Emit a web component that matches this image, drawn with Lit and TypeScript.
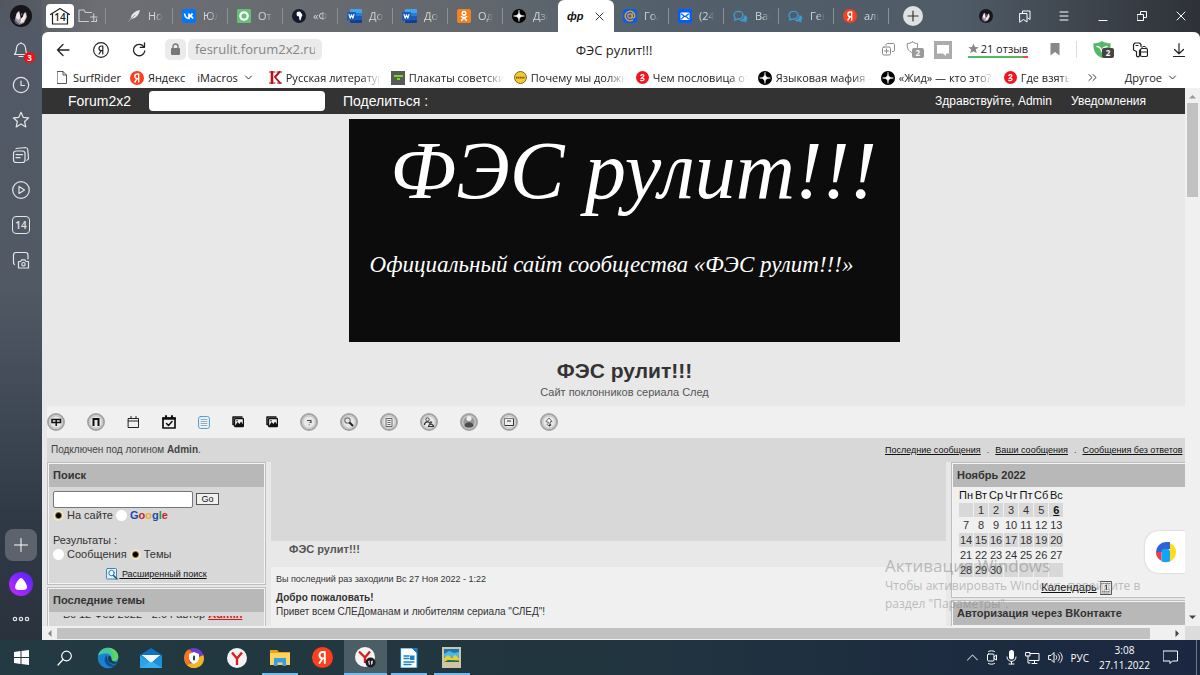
import { LitElement, html, svg, css, nothing } from "lit";
import type { TemplateResult } from "lit";
import { customElement } from "lit/decorators.js";
import { classMap } from "lit/directives/class-map.js";

const icon = (w: number, h: number, body: unknown) =>
  html`<svg width=${w} height=${h} viewBox="0 0 ${w} ${h}" fill="none" stroke-linecap="round" stroke-linejoin="round" aria-hidden="true">${body}</svg>`;

const avatar = (s: number) => html`<svg width=${s} height=${s} viewBox="0 0 22 22" aria-hidden="true">
  <circle cx="11" cy="11" r="11" fill="#17151c"/>
  <path d="M6 8l3-2 3 3 4-2 1 5-3 6-5 2-4-5z" fill="#a99aa4"/>
  <path d="M6.500 9l2.500-2 1.500 4-1.500 4-3-2z" fill="#f3e9ea"/><path d="M12 10l3.500-2 .5 4-2.500 5-3 1 .5-4z" fill="#f3e9ea"/>
  <path d="M10 2l.5 7 1 4M14 3l-1 6-1 3M7 5l-2 6" stroke="#17151c" stroke-width="1.300" fill="none"/>
  <path d="M3 14l4 3 4 3-5-1z" fill="#55607e"/></svg>`;

const I = {
  feather: icon(14, 14, svg`<path d="M1 13L4 9C4 5 8 2 13 1C12 5 10 9 4.500 10" fill="#e8e8e8"/><path d="M1 13L8 6" stroke="#8b8b8b" stroke-width=".8"/>`),
  vk: icon(14, 14, svg`<rect width="14" height="14" rx="3" fill="#07f"/><path d="M2.500 4.500C3 8 4.500 9.500 7 9.500V4.500M7 7.200C9 7 10 5.500 10.500 4.500M7.600 7.100C9.500 7.300 10.500 8.500 11 9.500" stroke="#fff" stroke-width="1.700" stroke-linecap="butt"/>`),
  greenO: icon(14, 14, svg`<rect width="14" height="14" rx="1" fill="#63c174"/><circle cx="7" cy="7" r="3.700" stroke="#fff" stroke-width="2.200"/>`),
  africa: icon(14, 14, svg`<circle cx="7" cy="7" r="7" fill="#15192e"/><path d="M5 3l3-.5 1.500 2L10.500 6 9.500 8 8.500 11.500 7.500 11 7 7.500 5 7 4.500 5z" fill="#fff"/>`),
  word: icon(15, 14, svg`<rect x="3" width="12" height="14" rx="1" fill="#41a5ee"/><path d="M3 4h12v3H3z" fill="#2b7cd3"/><path d="M3 7h12v3.500H3z" fill="#185abd"/><path d="M3 10.500h12V13a1 1 0 0 1-1 1H4a1 1 0 0 1-1-1z" fill="#103f91"/><rect y="3" width="9" height="8.500" rx="1" fill="#185abd"/><path d="M2 5.300l1.200 4L4.500 5.800l1.300 3.500L7 5.300" stroke="#fff" stroke-width="1.100"/>`),
  ok: icon(14, 14, svg`<rect width="14" height="14" rx="2" fill="#f58220"/><circle cx="7" cy="4.200" r="1.800" stroke="#fff" stroke-width="1.500"/><path d="M4.300 7.700c1.500 1 3.900 1 5.400 0M7 8.700L4.600 11.300M7 8.700l2.400 2.600" stroke="#fff" stroke-width="1.500"/>`),
  zen: icon(14, 14, svg`<circle cx="7" cy="7" r="7" fill="#000"/><path d="M7 1.500C7.200 5.500 8.500 6.800 12.500 7 8.500 7.200 7.200 8.500 7 12.500 6.800 8.500 5.500 7.200 1.500 7 5.500 6.800 6.800 5.500 7 1.500z" fill="#fff" stroke="#fff" stroke-width=".5"/>`),
  at: icon(14, 14, svg`<rect width="14" height="14" rx="3" fill="#005ff9"/><circle cx="7" cy="7" r="2.200" stroke="#ff9e00" stroke-width="1.300"/><path d="M9.200 5v2.600c0 1.800 2.600 1.600 2.600-.6A4.800 4.800 0 1 0 9.500 11.100" stroke="#ff9e00" stroke-width="1.300"/>`),
  mail: icon(14, 14, svg`<rect width="14" height="14" rx="2" fill="#005ff9"/><rect x="2.500" y="3.500" width="9" height="7.500" rx="1" fill="#fff"/><path d="M3.500 5L7 7.800 10.500 5M3.500 9.800l2-2M10.500 9.800l-2-2" stroke="#005ff9" stroke-width="1.200"/>`),
  chat: icon(15, 13, svg`<path d="M1 5a4.500 3.800 0 1 1 4.500 4C4 9 3.500 9.800 1.500 10c1-1 .7-1.700.7-2C1.500 7.300 1 6 1 5z" stroke="#3f9ad0" stroke-width="1.400"/><path d="M11.500 5c3 1 3.500 4 1.800 5.400-.2.500.3 1.200 1 1.900-1.600 0-2-.4-2.900-.9C9 11.800 7 11 6.500 10c3 0 5-2 5-5z" fill="#3f9ad0"/>`),
  ya: icon(14, 14, svg`<circle cx="7" cy="7" r="7" fill="#fc3f1d"/><path d="M8.700 11V3H7.500C5.500 3 4.800 4.300 4.800 5.300 4.800 6.800 6 7.700 7.500 7.700H8.500M7 7.700L4.900 11" stroke="#fff" stroke-width="1.400"/>`),
  doc: icon(10, 13, svg`<path d="M.5.5h5.500l3.500 3.500v8.500H.5zM6 .5V4h3.500" stroke="#555"/>`),
  kbook: icon(13, 13, svg`<path d="M0 1h6M0 12h6M8 1h4.500M8.500 12H13" stroke="#b5121b" stroke-width="1.200"/><path d="M3 1v11" stroke="#b5121b" stroke-width="2.600"/><path d="M10.500 1L6 6l5 6" stroke="#b5121b" stroke-width="1.900"/>`),
  poster: icon(14, 14, svg`<rect width="14" height="14" fill="#555c55"/><path d="M3 5h9M6 8h3" stroke="#7ed321" stroke-width="1.800" stroke-linecap="butt"/>`),
  yellow: icon(13, 13, svg`<circle cx="6.500" cy="6.500" r="6" fill="#f5c92e" stroke="#7b6a2a"/><path d="M2 6.700h9" stroke="#6d5511" stroke-width="1.800" stroke-dasharray="1.300 .5" stroke-linecap="butt"/>`),
  redZ: icon(13, 13, svg`<circle cx="6.500" cy="6.500" r="6.500" fill="#f0141e"/><path d="M4.800 4.300C5.800 3.200 8 3.500 7.900 4.800 7.800 6 5.200 6.300 5 7.600 5.800 7.100 8.300 7 8 8.600 7.700 10 5.500 9.900 4.700 9.300" stroke="#fff" stroke-width="1.200"/>`),
  chev: icon(9, 9, svg`<path d="M1.500 3l3 3 3-3" stroke="#333"/>`),
};

const disc = (body: unknown, dark = false) => html`<svg width="18" height="18" viewBox="0 0 18 18" fill="none" aria-hidden="true">
  <circle cx="9" cy="9" r="8" fill=${dark ? "#999" : "#e8e8e8"} stroke="#a3a3a3" stroke-width="2"/>
  <circle cx="9" cy="9" r="6.300" stroke="#c8c8c8" stroke-width="1.400"/>${body}</svg>`;
const photos = icon(12, 12, svg`<path d="M1 8.500V1h9M1 1v7.500h1" stroke="#111" stroke-width="1.500"/><rect x="2.500" y="2.500" width="9" height="8" rx="1" fill="#f2f2f2" stroke="#111" stroke-width="1.400"/><path d="M3 10l2.500-4 2 2 1.500-2.500L11.500 9v1.500z" fill="#111"/><circle cx="5" cy="4.700" r=".8" fill="#111"/>`);

const NAV: [string, TemplateResult][] = [
  ["Портал", disc(svg`<path d="M5 6.500h8.500v3H5zM9.200 6v7" stroke="#111" stroke-width="1.500"/>`)],
  ["Форум", disc(svg`<path d="M6.500 13V6h5v7" stroke="#111" stroke-width="2" stroke-linecap="butt"/>`)],
  ["Календарь", icon(13, 12, svg`<path d="M1.500 2.500h10v9h-10zM1.500 5h10M4 .5v2M9 .5v2" stroke="#222"/>`)],
  ["События", icon(14, 14, svg`<path d="M1 3h12v10H1z" stroke="#111" stroke-width="1.700"/><path d="M1 3.500h12" stroke="#111" stroke-width="2.500"/><path d="M4 1v2M10 1v2" stroke="#111" stroke-width="2"/><path d="M4.500 8.500l2 2L10 6.500" stroke="#111" stroke-width="1.500"/>`)],
  ["Публикации", icon(12, 13, svg`<rect x=".6" y=".6" width="10.800" height="11.800" rx="2" fill="#eef6fa" stroke="#4a9cc4"/><path d="M3 3.500h6M3 5.500h6M3 7.500h6M3 9.500h6" stroke="#7b98a6" stroke-width=".8"/>`)],
  ["Галерея", photos],
  ["Фото", photos],
  ["FAQ", disc(svg`<path d="M7 7.500h4v2H9.500M9.200 11.500v.8" stroke="#444" stroke-width="1.100"/>`)],
  ["Поиск", disc(svg`<circle cx="7.500" cy="7.500" r="2.700" stroke="#777" stroke-width="1.200"/><path d="M9.500 9.500l3.500 3.500" stroke="#222" stroke-width="1.900"/>`)],
  ["Регистрация", disc(svg`<path d="M6 5.500h6v8H6z" fill="#eee" stroke="#666"/><path d="M7.500 7.500h3M7.500 9.500h3M7.500 11.500h3" stroke="#666"/>`)],
  ["Пользователи", disc(svg`<circle cx="7.500" cy="6.500" r="1.700" stroke="#444"/><path d="M4.500 12c0-4 5.500-4 5.500-1M8.500 13.500c.5-3 4.500-3 5 0z" stroke="#333" stroke-width="1.200"/><circle cx="11" cy="9.500" r="1.300" fill="#555"/>`)],
  ["Профиль", disc(svg`<circle cx="9" cy="5.500" r="2.500" fill="#f0f0f0"/><path d="M4.500 13c0-5 9-5 9 0-2 2-7 2-9 0z" fill="#4d4d4d"/>`, true)],
  ["Сообщения", disc(svg`<path d="M4.500 5.500h9v7h-9z" fill="#eee" stroke="#777"/><path d="M5 12.500h8.500V6M7 8h4" stroke="#333"/>`)],
  ["Выход", disc(svg`<path d="M9 5l3 3.500h-1.500L9.500 13 7 11.500l2-2L6 8.500z" fill="#fff" stroke="#666"/><path d="M9 13l2-1.500" stroke="#222" stroke-width="1.300"/>`)],
];

const TABS_LEFT: [string, TemplateResult][] = [
  ["Новая", I.feather], ["Юля", I.vk], ["Ответы", I.greenO], ["«Фонд", I.africa], ["Документ", I.word],
  ["Документ", I.word], ["Одноклассники", I.ok], ["Дзен", I.zen],
];
const TABS_RIGHT: [string, TemplateResult][] = [
  ["Голос", I.at], ["(24) Почта", I.mail], ["Ваш", I.chat], ["Ген", I.chat], ["алиса", I.ya],
];
const MARKS: [string, TemplateResult][] = [
  ["Русская литература", I.kbook], ["Плакаты советские", I.poster], ["Почему мы должны", I.yellow],
  ["Чем пословица от", I.redZ], ["Языковая мафия - к", I.zen], ["«Жид» — кто это? О", I.zen],
];

const W = "#e3e5e8";
const SIDE: [string, TemplateResult][] = [
  ["История", icon(20, 20, svg`<circle cx="10" cy="10" r="7.700" stroke=${W} stroke-width="1.200"/><path d="M10 6v4.500h3.500" stroke=${W} stroke-width="1.200"/>`)],
  ["Избранное", icon(20, 20, svg`<path d="M10 2.300l2.200 5 5.500.5-4.100 3.700 1.200 5.400L10 14.100l-4.800 2.800 1.200-5.400L2.300 7.800l5.500-.5z" stroke=${W} stroke-width="1.200"/>`)],
  ["Коллекции", icon(20, 20, svg`<rect x="2.500" y="6" width="11.500" height="11.500" rx="2.500" stroke=${W} stroke-width="1.200"/><path d="M5 3.500l9.500-1c1.500 0 2 .7 2.200 2L17.500 13c0 1.500-.6 2-1.600 2.300M5 9.700h6.500M5 12.700h4" stroke=${W} stroke-width="1.200"/>`)],
  ["Видео", icon(20, 20, svg`<circle cx="10" cy="10" r="8.300" stroke=${W} stroke-width="1.200"/><path d="M8 6.500v7l5.500-3.500z" stroke=${W} stroke-width="1.200"/>`)],
];

const APPS: [string, string, TemplateResult][] = [
  ["Пуск", "", icon(15, 15, svg`<path d="M0 2l6.500-1v6H0zM7.500.9L15 0v7H7.500zM0 8h6.500v6L0 13zM7.500 8H15v7l-7.500-1z" fill="#fff"/>`)],
  ["Поиск", "", icon(16, 16, svg`<circle cx="9.500" cy="6" r="4.800" stroke="#fff" stroke-width="1.200"/><path d="M6 9.500L1 15" stroke="#fff" stroke-width="1.200"/>`)],
  ["Edge", "", icon(22, 22, svg`<circle cx="11" cy="11" r="10.300" fill="#1b82d0"/><path d="M1 9C2 3 7 .5 11.500.7 17 1 21.500 5 21.300 10c-.2 3.500-4 4.700-7 3.500-1-.5-.5-1 0-2C15 9 12.500 6.500 9.500 6.500 5 6.500 1.500 8 1 9z" fill="#45c8a0"/><path d="M11.500.7C17 1 21.500 5 21.300 10c-.2 3.500-4 4.700-7 3.500 5-3 1-10-2.800-12.800z" fill="#62d45a"/><path d="M10 8c-4 3-3 9 2.500 11.500 3 1 6-.5 7-2C15 19 10 15.500 10 8z" fill="#0f4f9a"/><path d="M11 10c-.5 3 1 5.500 4 6.500 2 .6 4 .3 6-1-3-.3-6.500-1-6.500-3.500C14.500 9.500 12 8 11 10z" fill="#203a44"/>`)],
  ["Почта", "", icon(22, 20, svg`<path d="M0 7L11 0l11 7v13H0z" fill="#0f6fc0"/><path d="M2 7h18l-9 8z" fill="#fff"/><path d="M0 7l11 8v5H0z" fill="#2aa3ea"/><path d="M22 7l-11 8v5h11z" fill="#1e8fdc"/><path d="M0 20l11-7 11 7z" fill="#35aef2"/><path d="M2 7h18l-9 7.500z" fill="#f1f8fd"/>`)],
  ["Браузер", "", icon(20, 20, svg`<circle cx="10" cy="10" r="10" fill="#6b3fc9"/><path d="M0 10a10 10 0 0 1 5-8.700L10 6l-5 6 2 5-3 1A10 10 0 0 1 0 10z" fill="#f2771a"/><path d="M20 10A10 10 0 0 1 3 17.200L10 14l5-5 4.500-2z" fill="#f6b51c"/><path d="M10 4l5 2v4c0 3-2.500 5-5 6-2.500-1-5-3-5-6V6z" fill="#fff"/><path d="M10 8.500v3" stroke="#274060" stroke-width="2"/>`)],
  ["Yandex Browser", "", icon(20, 20, svg`<circle cx="10" cy="10" r="10" fill="#f4f4f4"/><path d="M5 4.500l5 6 5-6M10 10.500V17" stroke="#e01b1b" stroke-width="2.300" stroke-linecap="butt"/>`)],
  ["Проводник", "run", icon(20, 17, svg`<path d="M0 1h7l2 2h11v13H0z" fill="#e8a317"/><path d="M0 4h20v12H0z" fill="#fcd462"/><path d="M4 9h12v8h-3.500v-3.500h-5V17H4z" fill="#3d9be0"/>`)],
  ["Яндекс", "", icon(21, 21, svg`<circle cx="10.500" cy="10.500" r="10.500" fill="#fc3f1d"/><path d="M12.800 16V5H11C8.500 5 7.500 6.600 7.500 8.200c0 1.900 1.500 3.200 3.500 3.200h1.500M10.500 11.500L7.500 16" stroke="#fff" stroke-width="1.900"/>`)],
  ["Yandex", "active", icon(22, 21, svg`<circle cx="10" cy="10" r="10" fill="#f4f4f4"/><path d="M4 4.500l6 6 5-6M10 10.500V16" stroke="#d81b1b" stroke-width="2.300" stroke-linecap="butt"/><circle cx="15.500" cy="15.500" r="5" fill="#1c1b22"/><path d="M13 14l1.500-.5.500 4-1 .5zM16 14l2-.5-.5 3.500-1.500 1z" fill="#d9d1d5"/>`)],
  ["Writer", "run", icon(18, 20, svg`<path d="M1 0h11l5 5v15H1z" fill="#fff"/><path d="M1 0h11l5 5v15H1z" stroke="#1a82c4"/><path d="M12 0h5.500v5.500z" fill="#1a7dbf"/><path d="M4 8h5M4 10.500h5M4 14h10M4 16.500h7" stroke="#1a82c4" stroke-width="1.400"/><path d="M10 7.500h4.500V12H10z" fill="#1a82c4"/>`)],
  ["Фото", "run", icon(19, 21, svg`<rect width="19" height="21" fill="#cfc3a8"/><rect x="2" y="2" width="15" height="13" fill="#1878b4"/><path d="M2 7l5-3 5 2 5-1v5H2z" fill="#4cb9e4"/><path d="M2 11l4-3 4 3 3-3 4 3v4H2z" fill="#e6cf35"/><path d="M2 15l4-2 11 .5V15z" fill="#1c6a4a"/>`)],
];

@customElement("app-sidebar")
class AppSidebar extends LitElement {
  static styles = css`
    :host { display: flex; flex-direction: column; align-items: center; flex: none; width: 42px; }
    button { display: grid; place-items: center; width: 42px; height: 35px; padding: 0; border: 0; background: none; position: relative; }
    .me { height: 32px; }
    .badge { position: absolute; left: 24px; top: 20px; width: 11px; height: 11px; border-radius: 6px; background: #f30f14; color: #fff; font: bold 8px/11px "Open Sans", sans-serif; text-align: center; }
    .num { width: 16px; height: 16px; border: 1px solid #e3e5e8; border-radius: 4px; color: #e3e5e8; font: 600 10px/16px "Open Sans", sans-serif; text-align: center; }
    .add { margin-top: auto; width: 32px; height: 32px; border-radius: 8px; background: #5c636d; }
    .alice { margin: 5px 0 0; }
    .dots { margin-bottom: 4px; }
  `;
  render() {
    return html`
      <button class="me" aria-label="Профиль">${avatar(22)}</button>
      <button aria-label="Уведомления">${icon(20, 20, svg`<path d="M10 2.500v1M3.500 14.500c2-2 1.700-4 2-6.500C6 5 7.700 3.500 10 3.500S14 5 14.500 8c.3 2.500 0 4.500 2 6.500zM8 16.500h4" stroke=${W} stroke-width="1.200"/>`)}<span class="badge">3</span></button>
      ${SIDE.map(([n, i]) => html`<button aria-label=${n}>${i}</button>`)}
      <button aria-label="Вкладки"><span class="num">14</span></button>
      <button aria-label="Снимок">${icon(20, 20, svg`<path d="M3.500 14.500c-.7-.5-1-1-1-2V5c0-1.700 1-2.500 2.500-2.500h9.500c1.700 0 2.500 1 2.500 2.500v4" stroke=${W} stroke-width="1.200"/><path d="M7.500 11.500h2l1.200-1.700h3.200l1.200 1.700h2.400v6.500h-10z" stroke=${W} stroke-width="1.200"/><circle cx="12.500" cy="14.200" r="1.700" stroke=${W} stroke-width="1.200"/>`)}</button>
      <button class="add" aria-label="Добавить">${icon(14, 14, svg`<path d="M7 .5v13M.5 7h13" stroke="#fff"/>`)}</button>
      <button class="alice" aria-label="Алиса">${icon(24, 24, svg`<defs><linearGradient id="al" x1="0" y1="1" x2="1" y2="0"><stop offset="0" stop-color="#c926ff"/><stop offset="1" stop-color="#4a26ff"/></linearGradient></defs><circle cx="12" cy="12" r="12" fill="url(#al)"/><path d="M12 6c2 0 6 6.500 6 9s-2 3-6 3-6-.5-6-3 4-9 6-9z" fill="#fff"/>`)}</button>
      <button class="dots" aria-label="Ещё">${icon(18, 6, svg`<circle cx="3" cy="3" r="1.700" stroke=${W} stroke-width="1.200"/><circle cx="9" cy="3" r="1.700" stroke=${W} stroke-width="1.200"/><circle cx="15" cy="3" r="1.700" stroke=${W} stroke-width="1.200"/>`)}</button>`;
  }
}

@customElement("app-tabs")
class AppTabs extends LitElement {
  static styles = css`
    :host { display: flex; align-items: center; flex: none; height: 32px; color: #d3d6da; font: 11px/16px "Open Sans", sans-serif; }
    button { display: grid; place-items: center; padding: 0; border: 0; background: none; color: inherit; font: inherit; }
    .home { margin-left: 4px; width: 28px; height: 24px; border-radius: 4px; background: #fff; color: #222; position: relative; }
    .count { position: absolute; left: 0; right: 0; top: 5px; font: 600 10px/16px "Open Sans", sans-serif; text-align: center; }
    .folder { width: 32px; height: 16px; border-right: 1px solid #8d9094; padding-right: 4px; margin-right: 12px; }
    .tab { display: flex; align-items: center; width: 55px; box-sizing: border-box; height: 16px; padding-left: 9px; border-right: 1px solid #8d9094; gap: 7px; }
    .tab svg { flex: none; }
    .name { width: 15px; text-align: left; overflow: hidden; white-space: nowrap; mask-image: linear-gradient(90deg, #000 50%, transparent); }
    .last { border-right-color: transparent; }
    .active { display: flex; align-items: center; justify-content: space-between; box-sizing: border-box; width: 56px; height: 32px; padding: 0 10px 0 9px; border-radius: 6px 6px 0 0; background: #fff; color: #111; }
    .fav { font: italic bold 11px/14px "Liberation Sans", sans-serif; }
    .plus { margin-left: 14px; width: 20px; height: 20px; border-radius: 10px; background: #dfe1e3; }
    .win { display: flex; align-items: center; margin-left: auto; }
    .win button { width: 39px; height: 28px; }
  `;
  tab(name: string, i: TemplateResult, last: boolean) {
    return html`<button class=${classMap({ tab: true, last })}>${i}<span class="name">${name}</span></button>`;
  }
  render() {
    return html`
      <button class="home" aria-label="Открытые вкладки">${icon(22, 18, svg`<path d="M1.500 7.500L11 1.500l9.500 6M3.500 6.500v10.500h15V6.500" stroke="#222" stroke-width="1.200"/>`)}<span class="count">14</span></button>
      <button class="folder" aria-label="Новая группа">${icon(20, 14, svg`<path d="M10.500 12.500H1V1h5l1.500 2.500h6M18.500 10v2.500h-5M12.500 8h6.500M15.700 4.700v6.600" stroke="#c9ccd0" stroke-width="1.100"/>`)}</button>
      ${TABS_LEFT.map(([n, i], k) => this.tab(n, i, k === TABS_LEFT.length - 1))}
      <div class="active"><span class="fav">фр</span><button aria-label="Закрыть вкладку">${icon(9, 9, svg`<path d="M1 1l7 7M8 1L1 8" stroke="#333"/>`)}</button></div>
      ${TABS_RIGHT.map(([n, i]) => this.tab(n, i, false))}
      <button class="plus" aria-label="Новая вкладка">${icon(12, 12, svg`<path d="M6 1v10M1 6h10" stroke="#333" stroke-width="1.200"/>`)}</button>
      <div class="win">
        <button aria-label="Профиль">${avatar(14)}</button>
        <button aria-label="Закладки">${icon(12, 13, svg`<path d="M1 3.500h7V12L4.500 9.500 1 12zM3.500 3.500V1H11v8.500l-2-1.500" stroke="#fff"/>`)}</button>
        <button aria-label="Меню">${icon(10, 10, svg`<path d="M1 1h8M1 5h8M1 9h8" stroke="#fff"/>`)}</button>
        <button aria-label="Свернуть">${icon(10, 10, svg`<path d="M1 9.500h8" stroke="#fff"/>`)}</button>
        <button aria-label="Окно">${icon(10, 10, svg`<path d="M.5 3.500h6v6h-6zM3.500 3.500v-3h6v6h-3" stroke="#fff"/>`)}</button>
        <button aria-label="Закрыть">${icon(10, 10, svg`<path d="M1 1l8 8M9 1L1 9" stroke="#fff"/>`)}</button>
      </div>`;
  }
}

@customElement("app-toolbar")
class AppToolbar extends LitElement {
  static styles = css`
    :host { display: block; flex: none; background: #fff; border-radius: 6px 6px 0 0; font: 11px/16px "Open Sans", sans-serif; color: #222; }
    button { display: grid; place-items: center; padding: 0; border: 0; background: none; font: inherit; color: inherit; }
    .bar { display: grid; grid-template-columns: 1fr auto 1fr; align-items: center; height: 35px; padding-right: 14px; }
    .left { display: flex; align-items: center; padding-left: 2px; }
    .left button { width: 38px; height: 28px; }
    .left .lock { width: 21px; height: 21px; margin-left: 7px; border-radius: 5px; background: #ebebeb; }
    .url { display: block; box-sizing: border-box; width: 134px; height: 21px; margin-left: 2px; padding: 0 7px; border: 0; border-radius: 5px; background: #ebebeb; color: #858585; font: 13px/21px "Open Sans", sans-serif; }
    .title { font-size: 13px; }
    .right { display: flex; align-items: center; justify-content: flex-end; gap: 11px; }
    .rate { margin-left: 5px; border-bottom: 2px solid; border-image: linear-gradient(90deg, #54b867 90%, #f04d3c 90%) 1; line-height: 14px; display: flex; align-items: center; gap: 2px; white-space: nowrap; }
    .mark { margin: 0 0 0 11px; }
    .shield { margin-left: 5px; border-left: 1px solid #ddd; padding-left: 16px; height: 17px; }
    .key { margin: 0 13px 0 8px; }
    .pin { position: relative; }
    .n { position: absolute; right: -1px; top: 7px; width: 12px; height: 10px; border-radius: 2px; background: #999; color: #fff; font: bold 8px/10px "Open Sans", sans-serif; text-align: center; }
    .shield .n { background: #444; }
    .marks { display: flex; align-items: center; height: 21px; padding: 0 23px 0 15px; gap: 10px; white-space: nowrap; }
    a { display: flex; align-items: center; gap: 4px; color: #222; text-decoration: none; }
    a svg { flex: none; }
    .doc { gap: 6px; margin-right: -1px; }
    .fade { width: 95px; overflow: hidden; mask-image: linear-gradient(90deg, #000 80%, transparent); }
    .short { width: 49px; }
    .drop { display: flex; align-items: center; gap: 6px; margin: 0 6px 0 2px; }
    .more { margin-left: 8px; }
    .other { margin: 0 0 0 auto; }
  `;
  render() {
    return html`
      <div class="bar">
        <div class="left">
          <button aria-label="Назад">${icon(14, 14, svg`<path d="M13 7H1.500M7 1.500L1.500 7 7 12.500" stroke="#222" stroke-width="1.300"/>`)}</button>
          <button aria-label="Яндекс">${icon(16, 16, svg`<circle cx="8" cy="8" r="7.400" stroke="#222" stroke-width="1.100"/><path d="M9.800 12V4H8.500C6.800 4 6 5.200 6 6.400c0 1.400 1 2.200 2.500 2.200h1.200M8.200 8.700L6 12" stroke="#222" stroke-width="1.200"/>`)}</button>
          <button aria-label="Обновить">${icon(14, 16, svg`<path d="M12 5A5.700 5.700 0 1 0 12.800 9M12.500 1v4.300H8.200" stroke="#222" stroke-width="1.300"/>`)}</button>
          <button class="lock" aria-label="Соединение">${icon(11, 13, svg`<rect x="1" y="5" width="9" height="7" rx="1" fill="#777"/><path d="M3 5V3.500a2.500 2.500 0 0 1 5 0V5" stroke="#777" stroke-width="1.400"/>`)}</button>
          <input class="url" aria-label="Адрес" .value=${"fesrulit.forum2x2.ru"} />
        </div>
        <span class="title">ФЭС рулит!!!</span>
        <div class="right">
          <button aria-label="Добавить">${icon(13, 13, svg`<rect x=".5" y="4" width="8" height="8" rx="1.500" stroke="#888"/><path d="M4.500 6v4M2.500 8h4M4 2.500V2c0-1 .5-1.500 1.500-1.500H11c1 0 1.500.5 1.500 1.500v5c0 1-.5 1.500-1.500 1.500h-.5" stroke="#888"/>`)}</button>
          <button class="pin" aria-label="Защита">${icon(17, 17, svg`<path d="M6.500.8c2 1.500 3.500 1.700 5 1.700 0 3 .3 5-1 7M6.500.8C4.500 2.300 3 2.500 1.200 2.500 1 7 2 10 6.500 12" stroke="#888"/>`)}<span class="n">2</span></button>
          <button aria-label="Комментарии">${icon(18, 18, svg`<rect width="18" height="18" fill="#ababab"/><path d="M3 4h12v8.500H12V15l-3-2.500H3z" fill="#fff"/>`)}</button>
          <button class="rate">${icon(11, 11, svg`<path d="M5.500.5L7 4l3.700.2-2.900 2.400 1 3.700-3.300-2-3.300 2 1-3.700L.3 4.200 4 4z" fill="#888"/>`)}21 отзыв</button>
          <button class="mark" aria-label="В закладки">${icon(10, 13, svg`<path d="M.5 0h9v12.500L5 9 .5 12.500z" fill="#888"/>`)}</button>
          <button class="shield pin" aria-label="Protect">${icon(20, 17, svg`<path d="M9 0c3 2 5.500 2.200 8.500 2.200C18 9 16 14 9 17 2 14 0 9 .5 2.200 3.500 2.200 6 2 9 0z" fill="#54b867"/><path d="M4 5.500c3 0 4 2 4.500 5C9 7.500 11 6 14 5.500" stroke="#fff" stroke-width="1.300"/>`)}<span class="n">2</span></button>
          <button class="key" aria-label="Пароли">${icon(16, 16, svg`<path d="M4.500 9.500L1.500 8V2.500L3 1h4.500L9 2.500v2M4.500 9.500V14L6 15l1.500-1V8M4 3.500h2" stroke="#222" stroke-width="1.200"/><rect x="8.500" y="6.500" width="7" height="8" rx="1.500" fill="#fff" stroke="#222" stroke-width="1.200"/><path d="M10 6.500v-1c.3-1.500 3.700-1.500 4 0v1M9 10h6" stroke="#222"/>`)}</button>
          <button aria-label="Загрузки">${icon(14, 16, svg`<path d="M7 1.500v10M2.500 7.500L7 11.800l4.500-4.300M1.500 14.500h11" stroke="#222" stroke-width="1.200"/>`)}</button>
        </div>
      </div>
      <div class="marks">
        <a class="doc" href="#">${I.doc}SurfRider</a>
        <a href="#">${I.ya}Яндекс</a>
        <button class="drop">iMacros ${I.chev}</button>
        ${MARKS.map(([n, i]) => html`<a href="#">${i}<span class="fade">${n}</span></a>`)}
        <a href="#">${I.redZ}<span class="fade short">Где взять н</span></a>
        <button class="more" aria-label="Ещё закладки">${icon(9, 9, svg`<path d="M1 1.500l3 3-3 3M5 1.500l3 3-3 3" stroke="#333"/>`)}</button>
        <button class="drop other">Другое ${I.chev}</button>
      </div>`;
  }
}

@customElement("forum-page")
class ForumPage extends LitElement {
  static styles = css`
    :host { display: block; flex: 1; min-width: 0; overflow: hidden; position: relative; background: #e8e8e8; font: 11px/14px "Liberation Sans", Arial, sans-serif; color: #333; }
    a { color: #111; }
    .top { display: flex; align-items: center; height: 26px; box-sizing: border-box; padding: 0 39px 0 26px; background: #333; color: #fff; font-size: 14px; }
    .top a { color: #fff; text-decoration: none; }
    .top input { width: 176px; height: 20px; box-sizing: border-box; margin: 0 18px; border: 0; border-radius: 4px; background: #fff; }
    .user { display: flex; gap: 19px; margin-left: auto; font-size: 12px; }
    .content { margin-left: 5px; width: calc(100% + 12px); }
    .head { text-align: center; height: 292px; box-sizing: border-box; padding-top: 5px; }
    .banner { width: 551px; height: 223px; margin: 0 auto; box-sizing: border-box; background: #0c0c0c; color: #fff; padding-top: 4px; font-family: "Liberation Serif", serif; font-style: italic; white-space: nowrap; }
    .big { font-size: 82px; line-height: 96px; padding-left: 18px; }
    .small { font-size: 23px; line-height: 32px; padding-top: 30px; padding-right: 26px; }
    h1 { margin: 15px 0 0; font-size: 21px; line-height: 28px; }
    .head p { margin: 0; color: #555; }
    .nav { display: flex; align-items: center; gap: 22px; height: 32px; background: #f0f0f0; }
    .nav a, .nav svg { display: block; }
    .status { display: flex; align-items: center; justify-content: space-between; height: 24px; padding: 0 0 0 4px; background: #d8d8d8; font-size: 10px; color: #444; }
    .links { display: flex; gap: 6px; white-space: nowrap; width: 317px; font-size: 9px; }
    .cols { display: grid; grid-template-columns: 219px minmax(0, 1fr) 251px; gap: 5px; }
    .mod { border: 1px solid #bdbdbd; padding: 1px; background: #f4f4f4; margin-bottom: 2px; }
    h2 { margin: 0; padding: 0 4px; background: #b8b8b8; font-size: 11px; line-height: 23px; height: 23px; }
    .body { background: #d8d8d8; padding: 3px 4px 2px; }
    .row { display: flex; align-items: center; gap: 3px; height: 14px; }
    .find { height: 18px; }
    .find input { width: 140px; height: 17px; box-sizing: border-box; border: 1px solid #777; border-radius: 2px; background: #fff; padding: 0 3px; }
    .find button { width: 23px; height: 12px; padding: 0; border: 1px solid #555; background: #f0f0f0; font: 9px/10px "Liberation Sans", sans-serif; color: #111; }
    label { display: flex; align-items: center; gap: 3px; }
    input[type="radio"] { appearance: none; width: 11px; height: 11px; margin: 0; border-radius: 6px; background: #fff; }
    input[type="radio"]:checked { background: radial-gradient(circle, #000 0 2px, #f6e8c0 4px, #e8dcb8 6px); }
    .g { font-weight: bold; }
    .b { color: #1a49b8; } .r { color: #c8232c; } .y { color: #e9b21c; } .gr { color: #2f9a3a; }
    .res { margin-top: 11px; }
    .adv { display: flex; justify-content: center; align-items: center; gap: 1px; margin-top: 6px; font-size: 9px; height: 14px; }
    .marquee { height: 9px; overflow: hidden; padding: 4px 0 20px 14px; background: #d8d8d8; }
    .marquee p { margin: 0; height: 4px; display: flex; align-items: flex-end; overflow: hidden; white-space: pre; }
    .marquee span { display: block; height: 14px; line-height: 16px; }
    .marquee a { color: #d11; }
    .ad { height: 79px; background: #d8d8d8; }
    .crumb { height: 26px; padding: 0 18px; line-height: 17px; font-weight: bold; font-size: 11px; color: #555; }
    .post { background: #f0f0f0; padding: 5px; height: 120px; font-size: 10px; }
    .post p { margin: 0; }
    .post .last { font-size: 9px; margin-bottom: 5px; }
    table { border-spacing: 1px; margin: 0 0 0 1px; color: #333; }
    th, td { width: 14px; height: 14px; padding: 0; text-align: center; line-height: 14px; font-weight: normal; }
    th { color: #111; }
    .light .body { background: #f0f0f0; padding: 0 4px 1px; }
    tr.odd td { background: #d8d8d8; }
    .cal { display: flex; align-items: center; justify-content: center; gap: 3px; height: 16px; margin-top: 1px; }
    .widget { position: absolute; right: 0; top: 443px; width: 40px; height: 42px; box-sizing: border-box; padding: 0 0 0 10px; border: 0; border-radius: 14px 0 0 14px; background: #fff; box-shadow: 0 0 2px #bbb; text-align: left; }
    .widget svg { display: block; }
  `;
  render() {
    const days = [0, ...Array.from({ length: 30 }, (_, i) => i + 1), 0, 0, 0, 0];
    const weeks = [0, 1, 2, 3, 4].map((w) => days.slice(w * 7, w * 7 + 7));
    return html`
      <div class="top"><a href="#">Forum2x2</a><input type="text" aria-label="Поиск по форуму" /><span>Поделиться :</span>
        <div class="user"><a href="#">Здравствуйте, Admin</a><a href="#">Уведомления</a></div></div>
      <div class="content">
        <div class="head">
          <div class="banner"><div class="big">ФЭС рулит!!!</div><div class="small">Официальный сайт сообщества «ФЭС рулит!!!»</div></div>
          <h1>ФЭС рулит!!!</h1>
          <p>Сайт поклонников сериала След</p>
        </div>
        <nav class="nav">${NAV.map(([n, i]) => html`<a href="#" aria-label=${n}>${i}</a>`)}</nav>
        <div class="status"><span>Подключен под логином <b>Admin</b>.</span>
          <div class="links"><a href="#">Последние сообщения</a><span>.</span><a href="#">Ваши сообщения</a><span>.</span><a href="#">Сообщения без ответов</a></div></div>
        <div class="cols">
          <div>
            <section class="mod"><h2>Поиск</h2>
              <div class="body">
                <div class="row find"><input type="text" aria-label="Поиск" /><button>Go</button></div>
                <div class="row"><label><input type="radio" name="where" checked />На сайте</label>
                  <label><input type="radio" name="where" /><span class="g"><span class="b">G</span><span class="r">o</span><span class="y">o</span><span class="b">g</span><span class="gr">l</span><span class="r">e</span></span></label></div>
                <div class="res">Результаты :</div>
                <div class="row"><label><input type="radio" name="what" />Сообщения</label><label><input type="radio" name="what" checked />Темы</label></div>
                <div class="adv">${icon(12, 12, svg`<rect x=".5" y=".5" width="10" height="10.500" rx="1" fill="#dff1fb" stroke="#3b87b5"/><circle cx="5.500" cy="5" r="2.700" fill="#fff" stroke="#2c79ab"/><path d="M7.500 7.500l3.500 3.500" stroke="#1a567f" stroke-width="1.500"/>`)}<a href="#">&nbsp;Расширенный поиск</a></div>
              </div>
            </section>
            <section class="mod"><h2>Последние темы</h2>
              <div class="marquee"><p><span>Вс 12 Фев 2022 - 2:04 автор <a href="#"><b>Admin</b></a></span></p></div>
            </section>
          </div>
          <main>
            <div class="ad"></div>
            <div class="crumb">ФЭС рулит!!!</div>
            <div class="post"><p class="last">Вы последний раз заходили Вс 27 Ноя 2022 - 1:22</p><p><b>Добро пожаловать!</b></p><p>Привет всем СЛЕДоманам и любителям сериала "СЛЕД"!</p></div>
          </main>
          <div class="light">
            <section class="mod"><h2>Ноябрь 2022</h2>
              <div class="body">
                <table>
                  <thead><tr>${["Пн", "Вт", "Ср", "Чт", "Пт", "Сб", "Вс"].map((d) => html`<th>${d}</th>`)}</tr></thead>
                  <tbody>${weeks.map((w, i) => html`<tr class=${i % 2 ? "" : "odd"}>${w.map((d) => html`<td>${d === 6 ? html`<a href="#"><b>6</b></a>` : d || nothing}</td>`)}</tr>`)}</tbody>
                </table>
                <div class="cal"><a href="#">Календарь</a>${icon(12, 15, svg`<path d="M.5 1.500h11v13H.5z" fill="#e8e8e8" stroke="#555"/><path d="M1 3.500h10M2 11.500h8M2 13h8" stroke="#888" stroke-dasharray="1 1"/><path d="M5 6l1.500-1v4.500" stroke="#444"/>`)}</div>
              </div>
            </section>
            <section class="mod"><h2>Авторизация через ВКонтакте</h2><div class="body"></div></section>
          </div>
        </div>
      </div>
      <button class="widget" aria-label="Виджет">${icon(22, 22, svg`<path d="M11 1a10 10 0 0 0-10 10h10z" fill="#2f62d9"/><path d="M1 11a10 10 0 0 0 5.500 9V11z" fill="#f23a4d"/><path d="M6.500 20.500V11c0-5 8.500-5 8.500 0v9.500c-3 1-6 1-8.500 0z" fill="#12a5f5"/><path d="M11 1h4v7H8z" fill="#2f62d9"/><path d="M15 2c8 3 8 15 0 18.500z" fill="#ffdd1a"/>`)}</button>`;
  }
}

@customElement("app-taskbar")
class AppTaskbar extends LitElement {
  static styles = css`
    :host { display: flex; flex: none; height: 35px; background: linear-gradient(90deg, #233a42, #21353f 50%, #1c2a40 85%, #1b2740); color: #fff; font: 10px/16px "Open Sans", sans-serif; }
    button { display: grid; place-items: center; width: 43px; padding: 0; border: 0; background: none; color: inherit; box-sizing: border-box; }
    .run { background: linear-gradient(#76b9ed, #76b9ed) center bottom / 36px 2px no-repeat; }
    .active { background: linear-gradient(#76b9ed, #76b9ed) center bottom / 100% 2px no-repeat #4b5e66; }
    .tray { display: flex; align-items: center; margin-left: auto; gap: 8px; }
    .time { text-align: center; margin-left: 2px; }
    .time div { line-height: 15px; }
    .tray .note { width: 41px; height: 35px; margin-left: -2px; border-right: 1px solid #6f7a86; padding-right: 12px; margin-right: 3px; }
  `;
  render() {
    return html`
      ${APPS.map(([n, c, i]) => html`<button class=${c} aria-label=${n}>${i}</button>`)}
      <div class="tray">
        ${icon(11, 7, svg`<path d="M.5 6l5-5 5 5" stroke="#fff"/>`)}
        ${icon(12, 15, svg`<rect x="1.500" y="4" width="6.500" height="7" rx="1" stroke="#fff"/><path d="M8 7l2.500-2v5L8 8.500M2.500 1.500c2-1 4-1 6 0M2.500 13.500c2 1 4 1 6 0" stroke="#fff"/>`)}
        ${icon(11, 15, svg`<rect x="3" y="0" width="5" height="9.500" rx="2.500" fill="#fff"/><path d="M1 7c0 6 9 6 9 0M5.500 11.500V14M3 14h5" stroke="#fff"/>`)}
        ${icon(15, 14, svg`<path d="M5 2.500h9v7H4.500M7 12.500h5M9.500 9.500v3M1 1.500h4v3.500H1zM3 5v7h2" stroke="#fff"/>`)}
        ${icon(15, 13, svg`<path d="M1 4.500h2l3-3v10l-3-3H1zM8 4.500c1 1 1 3 0 4M10 3c2 2 2 5 0 7M12 1.500c3 3 3 7 0 10" stroke="#fff"/>`)}
        <span>РУС</span>
        <div class="time"><div>3:08</div><div>27.11.2022</div></div>
        <button class="note" aria-label="Уведомления">${icon(15, 15, svg`<path d="M.5 1h14v10h-5L7 13.500V11H.5z" stroke="#fff"/>`)}</button>
      </div>`;
  }
}

@customElement("app-root")
class AppRoot extends LitElement {
  static styles = css`
    :host { display: flex; flex-direction: column; height: 100vh; overflow: hidden; position: relative; background: #39414c; }
    .browser { display: flex; flex: 1; min-height: 0; background: linear-gradient(180deg, #52576166, #525a67 33px, #515965 45%, #303a47 80%, #2a323e) left / 42px 100% no-repeat, linear-gradient(90deg, #52555f, #6c6e73 8%, #65696e 35%, #53606b 55%, #4f5b66 80%, #2e3137); }
    .main { display: flex; flex-direction: column; flex: 1; min-width: 0; }
    .view { display: flex; flex: 1; min-height: 0; }
    .vbar, .hbar { display: flex; align-items: center; background: #f0f0f0; flex: none; }
    .vbar { width: 15px; flex-direction: column; padding: 6px 0; box-sizing: border-box; }
    .vthumb { width: 11px; height: 94px; margin-top: 4px; margin-bottom: auto; background: #c1c1c1; }
    .hbar { height: 14px; padding-left: 5px; }
    .hthumb { flex: 1; height: 11px; margin: 0 25px 0 5px; background: #c1c1c1; }
    .corner { width: 15px; height: 14px; margin-left: 5px; background: #dcdcdc; }
    .mark { position: absolute; right: 50px; bottom: 62px; width: 265px; color: rgba(130, 130, 130, 0.5); font: 12px/18px "Open Sans", sans-serif; white-space: nowrap; pointer-events: none; }
    .mark b { display: block; font-size: 17px; line-height: 22px; font-weight: normal; }
  `;
  render() {
    return html`
      <div class="browser">
        <app-sidebar></app-sidebar>
        <div class="main">
          <app-tabs></app-tabs>
          <app-toolbar></app-toolbar>
          <div class="view">
            <forum-page></forum-page>
            <div class="vbar">${icon(7, 5, svg`<path d="M0 4.500L3.500 1 7 4.500z" fill="#999"/>`)}<div class="vthumb"></div>${icon(7, 5, svg`<path d="M0 .5L3.500 4 7 .5z" fill="#444"/>`)}</div>
          </div>
          <div class="hbar">${icon(5, 7, svg`<path d="M4.500 0L1 3.500 4.500 7z" fill="#888"/>`)}<div class="hthumb"></div>${icon(5, 7, svg`<path d="M.5 0L4 3.500.5 7z" fill="#444"/>`)}<div class="corner"></div></div>
        </div>
      </div>
      <app-taskbar></app-taskbar>
      <div class="mark"><b>Активация Windows</b>Чтобы активировать Windows, перейдите в<br />раздел "Параметры".</div>`;
  }
}
